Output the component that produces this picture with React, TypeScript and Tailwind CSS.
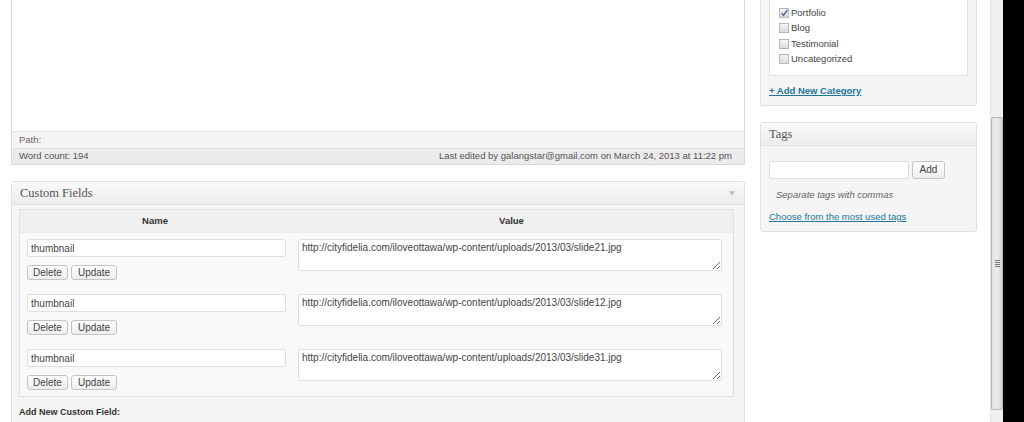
import React from "react";

const rows = [
  "http://cityfidelia.com/iloveottawa/wp-content/uploads/2013/03/slide21.jpg",
  "http://cityfidelia.com/iloveottawa/wp-content/uploads/2013/03/slide12.jpg",
  "http://cityfidelia.com/iloveottawa/wp-content/uploads/2013/03/slide31.jpg",
];

function Btn({ children, className = "" }: { children: React.ReactNode; className?: string }) {
  return (
    <button
      className={
        "h-[15px] border border-[#c4c4c4] rounded-[3px] bg-gradient-to-b from-white to-[#ededed] text-[10px] leading-none text-[#444] px-[5px] " +
        className
      }
    >
      {children}
    </button>
  );
}

function Check({ checked }: { checked?: boolean }) {
  return (
    <span className="relative inline-block w-[10px] h-[10px] border border-[#b8b8b8] bg-gradient-to-b from-[#f4f4f4] to-[#dcdcdc]">
      {checked && (
        <svg viewBox="0 0 10 10" className="absolute left-[0px] top-[-1px] w-[9px] h-[10px]">
          <path d="M1.8 5.2 L3.9 7.6 L8.2 1.6" fill="none" stroke="#3f5f8f" strokeWidth="1.5" />
        </svg>
      )}
    </span>
  );
}

export default function App() {
  return (
    <div className="flex w-[1024px] h-[422px] overflow-hidden bg-white text-[#444] font-['Liberation_Sans',Arial,sans-serif]">
      {/* main column */}
      <div className="ml-[11px] w-[734px] flex flex-col shrink-0">
        {/* editor */}
        <div className="border-x border-b border-[#d8d8d8] shrink-0">
          <div className="h-[131px] bg-white" />
          <div className="h-[17px] border-t border-[#e2e2e2] bg-[#f4f4f4] px-[7px] flex items-center text-[9.5px] text-[#666]">
            Path:
          </div>
          <div className="h-[16px] border-t border-[#e0e0e0] bg-[#ebebeb] px-[7px] flex items-center justify-between text-[9.5px] text-[#555]">
            <span>Word count: 194</span>
            <span className="pr-[5px]">Last edited by galangstar@gmail.com on March 24, 2013 at 11:22 pm</span>
          </div>
        </div>

        {/* custom fields */}
        <div className="mt-[16px] border border-[#e0e0e0] rounded-[3px] bg-[#f5f5f5] shrink-0 pb-[40px]">
          <div className="h-[23px] border-b border-[#e2e2e2] bg-gradient-to-b from-[#fafafa] to-[#ececec] flex items-center justify-between pl-[8px] pr-[9px]">
            <span className="font-['Liberation_Serif',Georgia,serif] text-[12.5px] text-[#555]">Custom Fields</span>
            <svg viewBox="0 0 8 6" className="w-[6px] h-[5px]">
              <path d="M0 0 H8 L4 6 Z" fill="#bbb" />
            </svg>
          </div>
          <div className="ml-[7px] mr-[10px] mt-[4px] border border-[#e0e0e0] bg-[#f9f9f9]">
            <div className="flex h-[23px] border-b border-[#ececec] bg-[#f0f0f0] text-[9.5px] font-bold text-[#333] items-center">
              <div className="w-[270px] text-center">Name</div>
              <div className="flex-1 text-center">Value</div>
            </div>
            {rows.map((url, i) => (
              <div key={i} className={"flex pt-[6px] " + (i === 2 ? "pb-[6px]" : "pb-[8px]")}>
                <div className="w-[270px] pl-[7px]">
                  <div className="w-[259px] h-[18px] border border-[#dfdfdf] rounded-[2px] bg-white text-[10px] text-[#444] px-[3px] flex items-center">
                    thumbnail
                  </div>
                  <div className="mt-[8px] flex gap-[3px]">
                    <Btn>Delete</Btn>
                    <Btn className="px-[6px]">Update</Btn>
                  </div>
                </div>
                <div className="flex-1 pl-[8px]">
                  <textarea
                    readOnly
                    value={url}
                    className="block w-[424px] h-[32px] border border-[#dfdfdf] rounded-[2px] bg-white text-[10px] leading-[12px] text-[#444] px-[3px] pt-[2px] resize-y overflow-hidden outline-none"
                  />
                </div>
              </div>
            ))}
          </div>
          <div className="ml-[7px] mt-[9px] text-[9px] font-bold text-[#333]">Add New Custom Field:</div>
        </div>
      </div>

      {/* sidebar */}
      <div className="ml-[15px] w-[217px] flex flex-col shrink-0">
        <div className="border-x border-b border-[#e0e0e0] rounded-b-[3px] bg-[#f5f5f5] px-[8px] pb-[8px]">
          <div className="border-x border-b border-[#e2e2e2] bg-white pt-[5px] pb-[8px] pl-[9px]">
            {["Portfolio", "Blog", "Testimonial", "Uncategorized"].map((c, i) => (
              <div key={c} className="h-[15.5px] flex items-center gap-[2px] text-[9.5px] text-[#444]">
                <Check checked={i === 0} />
                <span>{c}</span>
              </div>
            ))}
          </div>
          <div className="mt-[9px] text-[9.5px] font-bold text-[#21759b] underline leading-[12px]">+ Add New Category</div>
        </div>

        <div className="mt-[16px] border border-[#e0e0e0] rounded-[3px] bg-[#f5f5f5]">
          <div className="h-[23px] border-b border-[#e2e2e2] bg-gradient-to-b from-[#fafafa] to-[#ececec] flex items-center pl-[8px]">
            <span className="font-['Liberation_Serif',Georgia,serif] text-[12.5px] text-[#555]">Tags</span>
          </div>
          <div className="px-[8px] pt-[15px] pb-[8px]">
            <div className="flex gap-[3px]">
              <div className="w-[140px] h-[18px] border border-[#dfdfdf] rounded-[2px] bg-white" />
              <Btn className="h-[18px] w-[33px] px-0 text-[10px]">Add</Btn>
            </div>
            <div className="mt-[10px] pl-[7px] text-[9.5px] italic text-[#666] leading-[12px]">Separate tags with commas</div>
            <div className="mt-[10px] text-[9.5px] text-[#21759b] underline leading-[12px]">Choose from the most used tags</div>
          </div>
        </div>
      </div>

      {/* scrollbar */}
      <div className="ml-[13px] w-[13px] flex flex-col bg-[#f0f0f0] border-l border-[#e4e4e4] shrink-0">
        <div className="h-[117px]" />
        <div className="h-[293px] border border-[#b8b8b8] rounded-[2px] bg-gradient-to-r from-[#e2e2e2] via-[#ebebeb] to-[#d6d6d6] flex items-center justify-center">
          <div className="flex flex-col gap-[1px]">
            <div className="w-[5px] h-[1px] bg-[#777]" />
            <div className="w-[5px] h-[1px] bg-[#777]" />
            <div className="w-[5px] h-[1px] bg-[#777]" />
            <div className="w-[5px] h-[1px] bg-[#777]" />
          </div>
        </div>
        <div className="flex-1" />
      </div>
      <div className="flex-1 bg-black" />
    </div>
  );
}
